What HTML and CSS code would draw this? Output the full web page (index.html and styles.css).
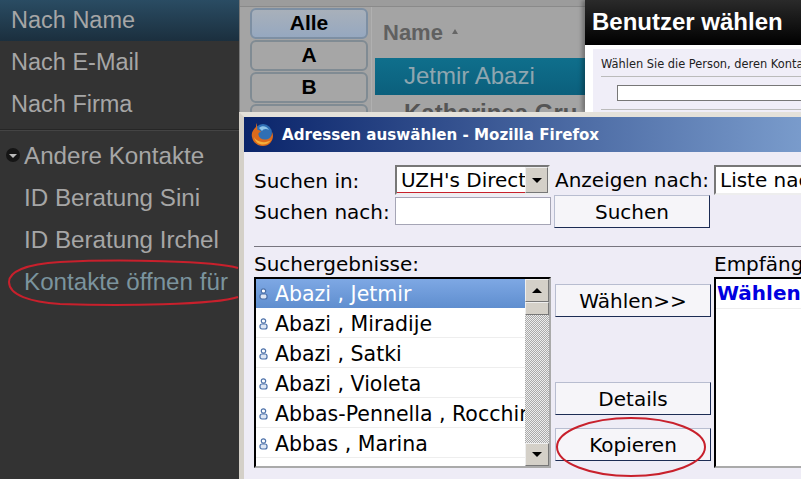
FILE: index.html
```html
<!DOCTYPE html>
<html lang="en">
<head>
    <meta charset="UTF-8">
    <meta name="viewport" content="width=device-width, initial-scale=1.0">
    <title>Adressen auswählen</title>
    <link rel="stylesheet" href="styles.css">
</head>
<body>
    <div class="sidebar">
        <div class="side-item active">Nach Name</div>
        <div class="side-item">Nach E-Mail</div>
        <div class="side-item">Nach Firma</div>
        <div class="side-line"></div>
        <div class="side-item sub"><span class="arrow"></span>Andere Kontakte</div>
        <div class="side-item sub">ID Beratung Sini</div>
        <div class="side-item sub">ID Beratung Irchel</div>
        <div class="side-item sub open-for">Kontakte öffnen für</div>
    </div>

    <div class="app">
        <div class="alpha">
            <div class="alpha-btn current">Alle</div>
            <div class="alpha-btn">A</div>
            <div class="alpha-btn">B</div>
            <div class="alpha-btn">C</div>
        </div>
        <div class="names">
            <div class="names-head">Name <span class="sort"></span></div>
            <div class="name-row selected">Jetmir Abazi</div>
            <div class="name-row">Katharinea Gru</div>
        </div>
    </div>

    <div class="user-dialog">
        <div class="user-title">Benutzer wählen</div>
        <div class="user-body">
            <p class="user-text">Wählen Sie die Person, deren Konta</p>
            <div class="user-input"></div>
            <div class="user-line"></div>
        </div>
    </div>

    <div class="ff-window">
        <div class="ff-title">
            <svg class="ff-logo" width="25" height="25" viewBox="0 0 25 25">
                <circle cx="13" cy="11" r="9" fill="#2f6fb5"/>
                <path d="M9 6 C12 3 17 4 19 8 C16 6 13 7 12 9 Z" fill="#8fc4e8"/>
                <path d="M7 1 C6 3 6 4 6 5 C3 8 1 11 2 15 C3 21 8 24 13 24 C19 24 23 19 23 14 C23 12 22.5 11 22 10 C22 14 20 17 16 17.5 C12 18 9 16 8.5 13 C8 11 9.5 10 11 10 C10 8 8 8 7.5 8 C7 6 7 3 7 1 Z" fill="#dd6a1c"/>
                <path d="M4 15 C5 20 9 22.5 13 22.5 C16 22.5 19 21 21 18 C18 20 14 21 10 19.5 C7 18.5 5 17 4 15 Z" fill="#f4b03c"/>
            </svg>
            <span>Adressen auswählen - Mozilla Firefox</span>
        </div>
        <div class="ff-body">
            <div class="search-row first">
                <label class="search-label">Suchen in:</label>
                <div class="select dir-select">
                    <span class="select-text underlined">UZH's Direct</span>
                    <span class="select-btn"><span class="tri-down"></span></span>
                </div>
                <label class="view-label">Anzeigen nach:</label>
                <div class="select view-select"><span class="select-text">Liste nac</span></div>
            </div>
            <div class="search-row">
                <label class="search-label">Suchen nach:</label>
                <div class="text-input"></div>
                <button class="ff-btn search-btn">Suchen</button>
            </div>
            <div class="ff-line"></div>
            <div class="columns">
                <div class="col-results">
                    <div class="col-label">Suchergebnisse:</div>
                    <div class="listbox">
                        <div class="list-rows">
                            <div class="list-row selected"><svg class="person"><use href="#person"/></svg>Abazi , Jetmir</div>
                            <div class="list-row"><svg class="person"><use href="#person"/></svg>Abazi , Miradije</div>
                            <div class="list-row"><svg class="person"><use href="#person"/></svg>Abazi , Satki</div>
                            <div class="list-row"><svg class="person"><use href="#person"/></svg>Abazi , Violeta</div>
                            <div class="list-row"><svg class="person"><use href="#person"/></svg>Abbas-Pennella , Rocchir</div>
                            <div class="list-row"><svg class="person"><use href="#person"/></svg>Abbas , Marina</div>
                        </div>
                        <div class="scrollbar">
                            <div class="scroll-btn"><span class="tri-up"></span></div>
                            <div class="scroll-thumb"></div>
                            <div class="scroll-track"></div>
                            <div class="scroll-btn"><span class="tri-down"></span></div>
                        </div>
                    </div>
                </div>
                <div class="col-actions">
                    <button class="ff-btn">Wählen&gt;&gt;</button>
                    <button class="ff-btn details-btn">Details</button>
                    <button class="ff-btn copy-btn">Kopieren</button>
                </div>
                <div class="col-recipients">
                    <div class="col-label">Empfäng</div>
                    <div class="listbox recipients">
                        <div class="recipient-row">Wählen</div>
                    </div>
                </div>
            </div>
        </div>
    </div>

    <!-- rote Markierungen -->
    <svg class="marks" width="801" height="479" viewBox="0 0 801 479">
        <path d="M238 268 C215 261 120 259 60 262 C25 264 9 272 9 282 C9 295 30 302 60 304 C120 306 215 305 238 297" fill="none" stroke="#c8202c" stroke-width="2"/>
        <ellipse cx="631" cy="447" rx="74" ry="29" fill="none" stroke="#c8202c" stroke-width="2"/>
    </svg>

    <svg width="0" height="0" class="defs">
        <symbol id="person" viewBox="0 0 9 12">
            <circle cx="4.5" cy="3" r="2.2" fill="#fff" stroke="#4a6fa8" stroke-width="1.2"/>
            <rect x="1" y="6" width="7" height="5" rx="2" fill="#dde6f4" stroke="#4a6fa8" stroke-width="1.2"/>
        </symbol>
    </svg>
</body>
</html>
```

FILE: styles.css
```css
html, body {
    margin: 0;
    width: 801px;
    height: 479px;
    overflow: hidden;
}

body {
    position: relative;
    display: flex;
    background: #333;
    font-family: "Liberation Sans", Arial, sans-serif;
}

/* linke Leiste */
.sidebar {
    width: 239px;
    flex: none;
    background: #333;
    color: #a6a6a6;
    font-size: 23.5px;
}

.side-item {
    height: 42px;
    line-height: 41px;
    padding-left: 11px;
    white-space: nowrap;
}

.side-item.active {
    height: 41px;
    margin-bottom: 1px;
    background: linear-gradient(#2a4c63, #1b2f3e);
    box-sizing: border-box;
}

.side-item.sub {
    padding-left: 24px;
    position: relative;
    font-size: 24.2px;
}

.side-line {
    height: 1px;
    margin: 3px 0 5px;
    background: #262626;
    box-shadow: 0 1px 0 #444;
}

.arrow {
    position: absolute;
    left: 6px;
    top: 13px;
    width: 14px;
    height: 14px;
    border-radius: 50%;
    background: #151515;
}

.arrow::after {
    content: "";
    position: absolute;
    left: 3px;
    top: 6px;
    border: 4px solid transparent;
    border-top-color: #bbb;
    border-bottom: 0;
}

.open-for {
    color: #7b949e;
}

/* Kontaktliste im Hintergrund */
.app {
    flex: 1;
    display: flex;
    gap: 3px;
    padding: 8px 0 0 10px;
    background: #a4a4a4;
    box-shadow: inset 0 6px 0 #9c9c9c, inset 0 7px 0 #8a8a8a;
    border-left: 1px solid #777;
}

.alpha {
    width: 118px;
    display: flex;
    flex-direction: column;
    gap: 1px;
    flex: none;
}

.alpha-btn {
    height: 31px;
    line-height: 25px;
    box-sizing: border-box;
    text-align: center;
    font-size: 21px;
    font-weight: bold;
    color: #000;
    background: #a6a6a6;
    border: 2px solid #808b93;
    border-radius: 6px;
}

.alpha-btn.current {
    background: linear-gradient(#a8b0ba, #96a8c0);
    border-color: #7d8fa3;
}

.names {
    flex: 1;
    padding-left: 3px;
    border-left: 1px solid #b0b0b0;
    margin-top: -1px;
}

.names-head {
    height: 51px;
    line-height: 51px;
    padding-left: 8px;
    font-size: 22px;
    font-weight: bold;
    color: #606060;
}

.sort {
    display: inline-block;
    margin: 0 0 6px 3px;
    border: 3px solid transparent;
    border-bottom: 5px solid #666;
    border-top: 0;
}

.name-row {
    height: 37px;
    line-height: 35px;
    padding-left: 29px;
    font-size: 24px;
    color: #555;
    font-weight: bold;
    white-space: nowrap;
    width: 181px;
    overflow: hidden;
}

.name-row.selected {
    background: linear-gradient(#0f6f8c, #0b5f7c);
    color: #8fa6b0;
    font-weight: normal;
}

/* Dialog Benutzer waehlen */
.user-dialog {
    position: absolute;
    left: 585px;
    top: 0;
    width: 216px;
    height: 112px;
    background: #fff;
    box-shadow: -3px 0 4px rgba(0, 0, 0, 0.3);
}

.user-title {
    height: 45px;
    line-height: 44px;
    padding-left: 7px;
    background: linear-gradient(#2a2a2a, #000);
    color: #fff;
    font-size: 24px;
    font-weight: bold;
    white-space: nowrap;
}

.user-body {
    margin: 4px 0 0 8px;
    height: 63px;
    padding: 0 0 0 8px;
    background: #f0eef8;
    overflow: hidden;
}

.user-text {
    margin: 0;
    height: 27px;
    border-bottom: 1px solid #bbb;
    font: 11.4px/30px "DejaVu Sans", sans-serif;
    color: #222;
    white-space: nowrap;
}

.user-input {
    margin: 8px 0 0 16px;
    height: 14px;
    background: #fff;
    border: 1px solid #777;
    width: 300px;
}

.user-line {
    margin-top: 8px;
    border-top: 1px solid #bbb;
}

/* Firefox Fenster */
.ff-window {
    position: absolute;
    left: 239px;
    top: 112px;
    width: 600px;
    height: 367px;
    box-sizing: border-box;
    border: 5px solid #d4d0c8;
    border-top-color: #e4e1da;
    border-bottom: 0;
    background: #eeecf6;
    color: #000;
    font-family: "DejaVu Sans", Verdana, sans-serif;
    font-size: 20px;
    overflow: hidden;
}

.ff-title {
    height: 35px;
    display: flex;
    align-items: center;
    gap: 7px;
    padding-left: 6px;
    background: linear-gradient(90deg, #0a246a, #7a9ccc 95%);
    color: #fff;
    font-size: 15.1px;
    font-weight: bold;
    white-space: nowrap;
}

.ff-body {
    padding: 13px 0 0 10px;
}

.search-row {
    display: flex;
    align-items: center;
    height: 32px;
    white-space: nowrap;
}

.search-row.first {
    height: 30px;
}

.search-label {
    width: 141px;
    flex: none;
    padding-top: 2px;
}

.select {
    display: flex;
    align-items: center;
    box-sizing: border-box;
    height: 30px;
    background: #fff;
    border: 2px solid;
    border-color: #777 #eee #eee #777;
    overflow: hidden;
}

.dir-select {
    width: 155px;
    flex: none;
}

.view-select {
    width: 200px;
    flex: none;
}

.select-text {
    padding-left: 4px;
    flex: 1;
    min-width: 0;
    overflow: hidden;
}

.underlined {
    border-bottom: 2px solid #c8202c;
    line-height: 24px;
    margin-top: 2px;
}

.select-btn, .scroll-btn {
    display: flex;
    align-items: center;
    justify-content: center;
    box-sizing: border-box;
    flex: none;
    background: #d4d0c8;
    border: 1px solid;
    border-color: #eee #777 #777 #eee;
}

.select-btn {
    width: 23px;
    height: 26px;
}

.tri-down {
    border: 5px solid transparent;
    border-top: 5px solid #000;
    border-bottom: 0;
}

.tri-up {
    border: 5px solid transparent;
    border-bottom: 5px solid #000;
    border-top: 0;
}

.view-label {
    width: 164px;
    padding-left: 5px;
    flex: none;
    box-sizing: border-box;
}

.text-input {
    width: 156px;
    height: 28px;
    box-sizing: border-box;
    background: #fff;
    border: 1px solid #a5a5b5;
    flex: none;
}

.ff-btn {
    display: block;
    height: 33px;
    width: 156px;
    padding: 0;
    background: #f6f5f9;
    border: 1px solid;
    border-color: #b8bdd0 #1c2c54 #1c2c54 #b8bdd0;
    font-family: inherit;
    font-size: 20px;
    color: #000;
}

.search-btn {
    margin-left: 3px;
    padding-top: 2px;
}

.ff-line {
    margin: 19px 0 0 0;
    height: 1px;
    background: #77757f;
}

.columns {
    display: flex;
    margin-top: 6px;
}

.col-label {
    height: 24px;
    line-height: 22px;
    white-space: nowrap;
}

.col-results {
    width: 301px;
    flex: none;
}

.listbox {
    display: flex;
    box-sizing: border-box;
    width: 297px;
    height: 191px;
    background: #fff;
    border: 2px solid #000;
    border-right-color: #aaa;
    border-bottom-color: #aaa;
}

.list-rows {
    flex: 1;
    min-width: 0;
    overflow: hidden;
    font-size: 20.5px;
}

.list-row {
    display: flex;
    align-items: center;
    height: 30px;
    box-sizing: border-box;
    padding-top: 3px;
    border-bottom: 1px solid #eee;
    white-space: nowrap;
    overflow: hidden;
}

.list-row.selected {
    height: 29px;
    padding-top: 1px;
    background: linear-gradient(#7ea8e4, #5f8ecf);
    color: #fff;
    border-bottom: 0;
}

.person {
    width: 9px;
    height: 12px;
    margin: 0 7px 0 3px;
    flex: none;
}

.scrollbar {
    width: 24px;
    flex: none;
    display: flex;
    flex-direction: column;
    background: repeating-conic-gradient(#aaa 0 25%, #eee 0 50%) 0 0 / 2px 2px;
}

.scroll-btn {
    height: 23px;
}

.scroll-thumb {
    height: 11px;
    background: #d4d0c8;
    border: 1px solid;
    border-color: #eee #777 #777 #eee;
}

.scroll-track {
    flex: 1;
}

.col-actions {
    width: 159px;
    flex: none;
    padding-top: 31px;
}

.details-btn {
    margin-top: 65px;
}

.copy-btn {
    margin-top: 13px;
}

.col-recipients {
    width: 200px;
    flex: none;
}

.recipients {
    display: block;
    width: 200px;
    border-right: 0;
}

.recipient-row {
    height: 30px;
    line-height: 28px;
    padding-left: 1px;
    box-sizing: border-box;
    border-bottom: 1px solid #eee;
    color: #0000e0;
    font-weight: bold;
    white-space: nowrap;
}

.marks {
    position: absolute;
    left: 0;
    top: 0;
    pointer-events: none;
}

.defs {
    position: absolute;
}
```
